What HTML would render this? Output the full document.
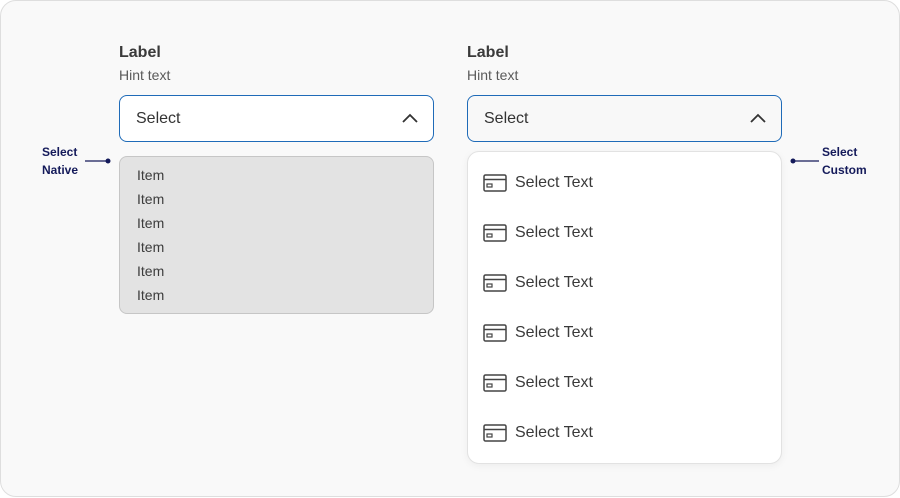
<!DOCTYPE html>
<html><head><style>
*{margin:0;padding:0;box-sizing:border-box}
body{width:900px;height:498px;background:#fff;font-family:"Liberation Sans",sans-serif;position:relative;overflow:hidden}
.card{position:absolute;left:0;top:0;width:900px;height:497px;background:#f9f9f9;border:1px solid #dedede;border-radius:16px}
.a{position:absolute}
.lab{font-size:16px;font-weight:bold;color:#3a3a3a}
.hint{font-size:14px;color:#5a5a5a}
.sel{position:absolute;width:315px;height:47px;border:1px solid #1f6bb8;border-radius:8px;font-size:16px;color:#333;padding:14px 0 0 16px}
.sel svg{position:absolute;right:15px;top:17px}
.native{left:119px;top:156px;width:315px;height:158px;background:#e3e3e3;border:1px solid #c6c6c6;border-radius:8px;padding:6px 0 0 17px;font-size:14px;color:#3c3c3c;line-height:24px}
.custom{left:467px;top:151px;width:315px;height:313px;background:#fff;border:1px solid #e2e2e2;border-radius:12px;box-shadow:0 2px 8px rgba(0,0,0,.05)}
.it{position:absolute;left:15px;height:20px;font-size:16px;color:#3a3a3a;display:flex;align-items:center}
.it svg{margin-right:8px}
.ann{font-size:12px;font-weight:bold;color:#141a5a;line-height:18px}
</style></head><body>
<div class="card"></div>
<div class="a lab" style="left:119px;top:44px">Label</div>
<div class="a hint" style="left:119px;top:67px">Hint text</div>
<div class="a lab" style="left:467px;top:44px">Label</div>
<div class="a hint" style="left:467px;top:67px">Hint text</div>
<div class="sel" style="left:119px;top:95px;background:#fff">Select<svg width="16" height="10" viewBox="0 0 16 10"><path d="M1 9L8 2L15 9" fill="none" stroke="#333" stroke-width="1.8"/></svg></div>
<div class="sel" style="left:467px;top:95px;background:#f8f8f8">Select<svg width="16" height="10" viewBox="0 0 16 10"><path d="M1 9L8 2L15 9" fill="none" stroke="#333" stroke-width="1.8"/></svg></div>
<div class="a native">Item<br>Item<br>Item<br>Item<br>Item<br>Item</div>
<div class="a custom">
<div class="it" style="top:21px"><svg width="24" height="18" viewBox="0 0 24 18"><rect x="1" y="1" width="22" height="16" rx="1.5" fill="none" stroke="#444" stroke-width="1.5"/><path d="M1 5.5H23" stroke="#444" stroke-width="1.5"/><rect x="4" y="10" width="5" height="3" fill="none" stroke="#444" stroke-width="1.2"/></svg>Select Text</div>
<div class="it" style="top:71px"><svg width="24" height="18" viewBox="0 0 24 18"><rect x="1" y="1" width="22" height="16" rx="1.5" fill="none" stroke="#444" stroke-width="1.5"/><path d="M1 5.5H23" stroke="#444" stroke-width="1.5"/><rect x="4" y="10" width="5" height="3" fill="none" stroke="#444" stroke-width="1.2"/></svg>Select Text</div>
<div class="it" style="top:121px"><svg width="24" height="18" viewBox="0 0 24 18"><rect x="1" y="1" width="22" height="16" rx="1.5" fill="none" stroke="#444" stroke-width="1.5"/><path d="M1 5.5H23" stroke="#444" stroke-width="1.5"/><rect x="4" y="10" width="5" height="3" fill="none" stroke="#444" stroke-width="1.2"/></svg>Select Text</div>
<div class="it" style="top:171px"><svg width="24" height="18" viewBox="0 0 24 18"><rect x="1" y="1" width="22" height="16" rx="1.5" fill="none" stroke="#444" stroke-width="1.5"/><path d="M1 5.5H23" stroke="#444" stroke-width="1.5"/><rect x="4" y="10" width="5" height="3" fill="none" stroke="#444" stroke-width="1.2"/></svg>Select Text</div>
<div class="it" style="top:221px"><svg width="24" height="18" viewBox="0 0 24 18"><rect x="1" y="1" width="22" height="16" rx="1.5" fill="none" stroke="#444" stroke-width="1.5"/><path d="M1 5.5H23" stroke="#444" stroke-width="1.5"/><rect x="4" y="10" width="5" height="3" fill="none" stroke="#444" stroke-width="1.2"/></svg>Select Text</div>
<div class="it" style="top:271px"><svg width="24" height="18" viewBox="0 0 24 18"><rect x="1" y="1" width="22" height="16" rx="1.5" fill="none" stroke="#444" stroke-width="1.5"/><path d="M1 5.5H23" stroke="#444" stroke-width="1.5"/><rect x="4" y="10" width="5" height="3" fill="none" stroke="#444" stroke-width="1.2"/></svg>Select Text</div>
</div>
<div class="a ann" style="left:42px;top:143px">Select<br>Native</div>
<svg class="a" style="left:84px;top:157px" width="28" height="8"><path d="M1 4H24" stroke="#141a5a" stroke-width="1.2"/><circle cx="24" cy="4" r="2.5" fill="#141a5a"/></svg>
<svg class="a" style="left:789px;top:157px" width="32" height="8"><path d="M4 4H30" stroke="#141a5a" stroke-width="1.2"/><circle cx="4" cy="4" r="2.5" fill="#141a5a"/></svg>
<div class="a ann" style="left:822px;top:143px">Select<br>Custom</div>
</body></html>
